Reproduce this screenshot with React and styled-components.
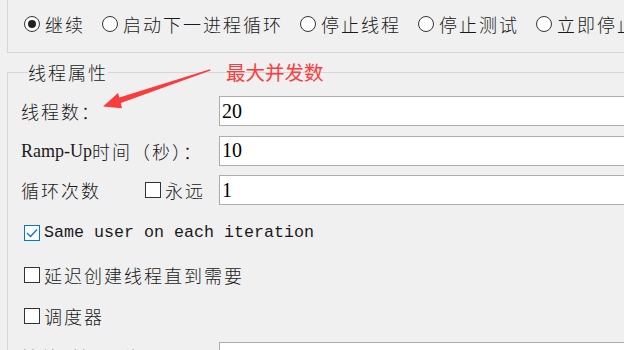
import React from "react";
import styled, { createGlobalStyle } from "styled-components";

const GlobalStyle = createGlobalStyle`
  html, body { margin: 0; padding: 0; background: #f0f0f0; }
  body { overflow: hidden; }
  * { box-sizing: border-box; }
`;

const Page = styled.div`
  position: relative;
  width: 624px;
  height: 350px;
  overflow: hidden;
  background: #f0f0f0;
  color: #1a1a1a;
  font-family: "Noto Sans CJK SC", "Noto Sans", sans-serif;
`;

const Cjk = styled.span`
  font-family: "Noto Sans CJK SC", "Noto Sans", sans-serif;
  font-size: 18px;
  font-weight: 300;
  letter-spacing: 2px;
  line-height: 20px;
  white-space: nowrap;
`;

const Latin = styled.span`
  font-family: "Liberation Mono", "DejaVu Sans Mono", monospace;
  font-size: 16.67px;
  letter-spacing: 0;
  line-height: 20px;
  white-space: nowrap;
`;

const SerifLatin = styled.span`
  font-family: "Liberation Serif", "Times New Roman", serif;
  font-size: 18px;
  letter-spacing: 0;
  line-height: 20px;
  white-space: nowrap;
`;

const TopGroup = styled.div`
  margin-left: 7px;
  width: 720px;
  height: 53px;
  border-left: 1px solid #d6d6d6;
  border-bottom: 1px solid #d6d6d6;
  display: flex;
  align-items: center;
  padding: 0 0 5px 16px;
  gap: 17px;
`;

const RadioItem = styled.label`
  display: flex;
  align-items: center;
  gap: 5px;
`;

const Radio = styled.span`
  width: 16px;
  height: 16px;
  border-radius: 50%;
  border: 1.5px solid #333;
  background: #fff;
  display: flex;
  align-items: center;
  justify-content: center;
  flex: none;
  &::after {
    content: "";
    width: 8px;
    height: 8px;
    border-radius: 50%;
    background: ${(p) => (p.$checked ? "#222" : "transparent")};
  }
`;

const Fieldset = styled.fieldset`
  margin: 9px 0 0 7px;
  padding: 14px 0 0 13px;
  width: 720px;
  height: 400px;
  border: 1px solid #d6d6d6;
  min-inline-size: 0;
`;

const Legend = styled.legend`
  margin-left: 7px;
  padding: 0;
  height: 20px;
  display: flex;
  align-items: center;
`;

const FormRows = styled.div`
  display: flex;
  flex-direction: column;
  gap: 9.5px;
`;

const FormRow = styled.div`
  display: grid;
  grid-template-columns: 198px 1fr;
  align-items: center;
  height: 30px;
  margin-top: ${(p) => p.$mt || 0}px;
`;

const LabelCell = styled.div`
  display: flex;
  align-items: center;
`;

const Input = styled.div`
  height: 30px;
  border: 1px solid #adadad;
  background: #fff;
  padding-left: 2px;
  display: flex;
  align-items: center;
  font-family: "Liberation Serif", "Times New Roman", serif;
  font-size: 20px;
  color: #000;
`;

const Checks = styled.div`
  display: flex;
  flex-direction: column;
  gap: 11.5px;
  margin-top: 13px;
  padding-left: 3px;
`;

const CheckRow = styled.label`
  display: flex;
  align-items: center;
  gap: 4px;
  height: 30px;
  margin-left: ${(p) => p.$ml || 0}px;
`;

const Box = styled.span`
  position: relative;
  width: 16px;
  height: 16px;
  flex: none;
  background: #fff;
  border: 1px solid ${(p) => (p.$checked ? "#0078d7" : "#333")};
  display: flex;
  align-items: center;
  justify-content: center;
`;

const Note = styled.div`
  position: absolute;
  left: 226px;
  top: 60px;
  font-family: "Noto Sans CJK SC", sans-serif;
  font-size: 19.5px;
  line-height: 24px;
  color: #ff3b3b;
  letter-spacing: 0;
  white-space: nowrap;
`;

const Overlay = styled.svg`
  position: absolute;
  left: 0;
  top: 0;
  pointer-events: none;
`;

function Check({ checked }) {
  return (
    <Box $checked={checked}>
      {checked && (
        <svg width="12" height="10" viewBox="0 0 12 10">
          <path d="M1 5 L4.5 8.5 L11 1.5" fill="none" stroke="#0078d7" strokeWidth="1.3" />
        </svg>
      )}
    </Box>
  );
}

const radios = [
  { t: "继续", c: true },
  { t: "启动下一进程循环" },
  { t: "停止线程" },
  { t: "停止测试" },
  { t: "立即停止线程" },
];

export default function App() {
  return (
    <Page>
      <GlobalStyle />
      <TopGroup>
        {radios.map((r) => (
          <RadioItem key={r.t}>
            <Radio $checked={r.c} />
            <Cjk>{r.t}</Cjk>
          </RadioItem>
        ))}
      </TopGroup>
      <Fieldset>
        <Legend>
          <Cjk>线程属性</Cjk>
        </Legend>
        <FormRows>
          <FormRow>
            <LabelCell>
              <Cjk>线程数：</Cjk>
            </LabelCell>
            <Input>20</Input>
          </FormRow>
          <FormRow>
            <LabelCell>
              <SerifLatin>Ramp-Up</SerifLatin>
              <Cjk>时间（秒）：</Cjk>
            </LabelCell>
            <Input>10</Input>
          </FormRow>
          <FormRow>
            <LabelCell>
              <Cjk>循环次数</Cjk>
              <CheckRow $ml={44}>
                <Check />
                <Cjk>永远</Cjk>
              </CheckRow>
            </LabelCell>
            <Input>1</Input>
          </FormRow>
        </FormRows>
        <Checks>
          <CheckRow>
            <Check checked />
            <Latin>Same user on each iteration</Latin>
          </CheckRow>
          <CheckRow>
            <Check />
            <Cjk>延迟创建线程直到需要</Cjk>
          </CheckRow>
          <CheckRow>
            <Check />
            <Cjk>调度器</Cjk>
          </CheckRow>
        </Checks>
        <FormRow $mt={11}>
          <LabelCell>
            <Cjk>持续时间（秒）</Cjk>
          </LabelCell>
          <Input />
        </FormRow>
      </Fieldset>
      <Note>最大并发数</Note>
      <Overlay width="624" height="350" viewBox="0 0 624 350">
        <polygon
          points="210,69.2 119.3,97.6 118,93 103,106.5 122,108.3 120.8,103 210.6,70.6"
          fill="#fa3c3c"
        />
      </Overlay>
    </Page>
  );
}
